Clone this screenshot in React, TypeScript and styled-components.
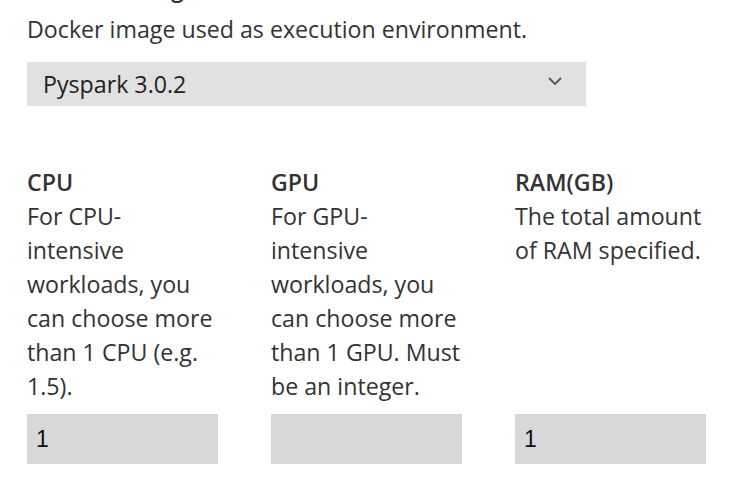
import React from "react";
import styled, { createGlobalStyle } from "styled-components";

const Global = createGlobalStyle`
  html, body { margin: 0; padding: 0; background: #ffffff; }
  body { font-family: "Open Sans", "Noto Sans", sans-serif; color: #333333; overflow: hidden; }
`;

const Page = styled.div`
  width: 740px;
  height: 502px;
  padding: 0 27px;
  box-sizing: border-box;
  overflow: hidden;
`;

const Section = styled.section`
  display: flex;
  flex-direction: column;
`;

const CutHeading = styled.h3`
  margin: -29px 0 7px 0;
  font-size: 23.2px;
  line-height: 34px;
  font-weight: 600;
  color: #333333;
`;

const Description = styled.p`
  margin: 0;
  font-size: 23.2px;
  line-height: 34px;
  color: #333333;
`;

const Select = styled.div`
  margin-top: 16px;
  width: 559px;
  height: 44px;
  background: #e1e1e1;
  display: flex;
  align-items: center;
  justify-content: space-between;
  padding: 0 24px 0 16px;
  box-sizing: border-box;
  font-size: 23.2px;
  color: #222222;
`;

const Chevron = styled.svg`
  width: 14px;
  height: 8px;
  margin-top: -6px;
`;

const Grid = styled.div`
  margin-top: 59px;
  display: grid;
  grid-template-columns: repeat(3, 191px);
  column-gap: 53px;
`;

const Column = styled.div`
  display: flex;
  flex-direction: column;
`;

const Label = styled.div`
  font-size: 23.2px;
  line-height: 34px;
  font-weight: 600;
  color: #333333;
`;

const Help = styled.div`
  flex: 1;
  font-size: 23.2px;
  line-height: 34px;
  color: #333333;
`;

const Input = styled.div`
  margin-top: 11px;
  height: 50px;
  background: #d8d8d8;
  display: flex;
  align-items: center;
  padding-left: 9px;
  font-family: "Liberation Sans", sans-serif;
  font-size: 23px;
  color: #111111;
`;

const fields = [
  {
    label: "CPU",
    help: "For CPU-intensive workloads, you can choose more than 1 CPU (e.g. 1.5).",
    value: "1",
  },
  {
    label: "GPU",
    help: "For GPU-intensive workloads, you can choose more than 1 GPU. Must be an integer.",
    value: "",
  },
  {
    label: "RAM(GB)",
    help: "The total amount of RAM specified.",
    value: "1",
  },
];

export default function App() {
  return (
    <>
      <Global />
      <Page>
        <Section>
          <CutHeading>Runtime Image</CutHeading>
          <Description>Docker image used as execution environment.</Description>
          <Select>
            <span>Pyspark 3.0.2</span>
            <Chevron viewBox="0 0 14 8" fill="none">
              <path d="M1 1l6 6 6-6" stroke="#555" strokeWidth="1.8" />
            </Chevron>
          </Select>
        </Section>
        <Grid>
          {fields.map((f) => (
            <Column key={f.label}>
              <Label>{f.label}</Label>
              <Help>{f.help}</Help>
              <Input>{f.value}</Input>
            </Column>
          ))}
        </Grid>
      </Page>
    </>
  );
}
